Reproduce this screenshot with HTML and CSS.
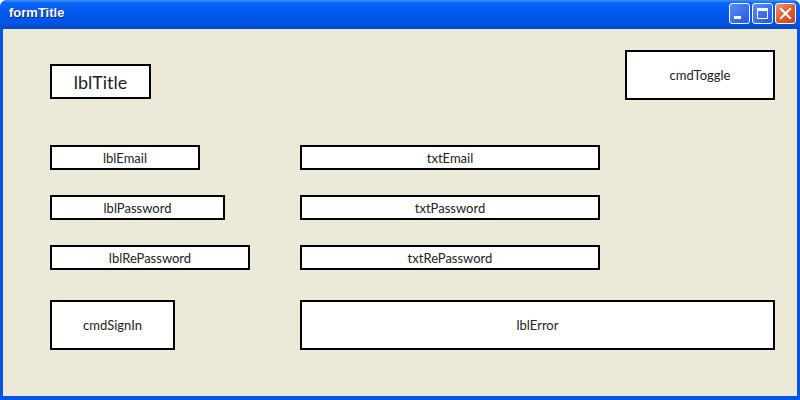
FILE: index.html
```html
<!DOCTYPE html>
<html>
<head>
<meta charset="utf-8">
<link rel="stylesheet" href="styles.css">
</head>
<body>
<div class="window">
  <div class="titlebar">
    <span class="title">formTitle</span>
    <div class="controls">
      <div class="btn btn-min"><svg width="21" height="21" viewBox="0 0 21 21"><rect x="5" y="13" width="7" height="3" fill="#fff"/></svg></div>
      <div class="btn btn-max"><svg width="21" height="21" viewBox="0 0 21 21"><rect x="5.5" y="5.5" width="10" height="10" fill="none" stroke="#fff" stroke-width="1"/><rect x="5" y="5" width="11" height="3" fill="#fff"/></svg></div>
      <div class="btn btn-close"><svg width="21" height="21" viewBox="0 0 21 21"><path d="M6 6 L15 15 M15 6 L6 15" stroke="#fff" stroke-width="2.2" stroke-linecap="square"/></svg></div>
    </div>
  </div>
  <div class="client">
    <div class="header">
      <div class="box title-box">lblTitle</div>
      <div class="box toggle-box">cmdToggle</div>
    </div>
    <div class="form">
      <div class="box field w150">lblEmail</div>
      <div class="box field w300">txtEmail</div>
      <div class="box field w175">lblPassword</div>
      <div class="box field w300">txtPassword</div>
      <div class="box field w200">lblRePassword</div>
      <div class="box field w300">txtRePassword</div>
      <div class="box big w125">cmdSignIn</div>
      <div class="box big error">lblError</div>
    </div>
  </div>
</div>
</body>
</html>
```
FILE: styles.css
```css
* { box-sizing: border-box; }
html, body { margin: 0; padding: 0; }
body { width: 800px; height: 400px; overflow: hidden; background: #fff; }
.window {
  width: 800px; height: 400px;
  display: flex; flex-direction: column;
  background: #0055e5;
  border-radius: 7px 7px 0 0;
  overflow: hidden;
}
.titlebar {
  height: 29px; flex: none;
  display: flex; align-items: center; justify-content: space-between;
  padding: 0 4px 0 9px;
  background: linear-gradient(to bottom, #3d95ff 0%, #0a66f5 10%, #0058ee 45%, #0054e3 80%, #0148c6 100%);
}
.title {
  font-family: "Liberation Sans", Arial, sans-serif;
  font-weight: bold; font-size: 13px; color: #fff;
  text-shadow: 1px 1px 0 #0a1f7d;
  position: relative; top: -2px;
}
.controls { display: flex; gap: 2px; margin-top: -3px; }
.btn {
  width: 21px; height: 21px; border: 1px solid #fff; border-radius: 3px;
  display: flex; align-items: center; justify-content: center;
}
.btn svg { display: block; margin: -1px; }
.btn-min, .btn-max { background: linear-gradient(135deg, #5c8ef5 0%, #3c72ee 50%, #2456e0 100%); }
.btn-close { background: linear-gradient(135deg, #f0946e 0%, #e65a2c 50%, #d0401c 100%); }
.client {
  flex: 1;
  margin: 0 3px 4px 3px;
  background: #ece9d8;
  padding: 21px 22px 0 47px;
  font-family: Lato, "Open Sans", sans-serif;
  color: #222;
}
.box {
  background: #fff; border: 2px solid #000;
  display: flex; align-items: center; justify-content: center;
}
.header { display: flex; justify-content: space-between; align-items: flex-start; }
.title-box { width: 101px; height: 35px; margin-top: 14px; font-size: 18px; }
.toggle-box { width: 150px; height: 50px; font-size: 13px; }
.form {
  margin-top: 45px;
  display: grid;
  grid-template-columns: 250px 1fr;
  grid-auto-rows: 25px;
  row-gap: 25px;
  font-size: 13px;
}
.field { height: 25px; }
.w150 { width: 150px; }
.w175 { width: 175px; }
.w200 { width: 200px; }
.w300 { width: 300px; }
.w125 { width: 125px; }
.big { height: 50px; margin-top: 5px; }
.error { width: 475px; }
```
